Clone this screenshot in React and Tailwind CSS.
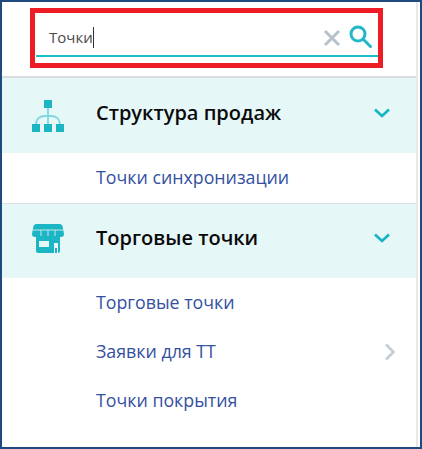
import React from 'react';

const NetworkIcon = () => (
  <svg width="32" height="32" viewBox="0 0 32 32" fill="#1cb5c4">
    <rect x="12" y="0" width="8" height="8" />
    <rect x="0" y="24" width="8" height="8" />
    <rect x="12" y="24" width="8" height="8" />
    <rect x="24" y="24" width="8" height="8" />
    <path d="M16 8v16M4 24c0-5 4-8 9-8h6c5 0 9 3 9 8" fill="none" stroke="#7fd6de" strokeWidth="1.8" />
  </svg>
);

const ShopIcon = () => (
  <svg width="32" height="29" viewBox="0 0 32 29" fill="#1cb5c4" className="mb-[5px]">
    <path d="M4 0h24c1 0 2 1 2.500 2L32 10c0 2-1 3-3 3H3c-2 0-3-1-3-3l1.500-8C2 1 3 0 4 0z" />
    <path d="M4 13h24v14c0 1-1 2-2 2H6c-1 0-2-1-2-2z" />
    <path d="M1 6h30M9 6v6M16 6v6M23 6v6" fill="none" stroke="#bfeaee" strokeWidth="1" />
    <rect x="7" y="17" width="10" height="6" fill="#e6f7f8" />
    <rect x="22" y="19" width="4" height="10" fill="#e6f7f8" />
    <rect x="23" y="24" width="2" height="5" fill="#1cb5c4" />
  </svg>
);

const ChevronDown = () => (
  <svg width="16" height="10" viewBox="0 0 16 10" fill="none" stroke="#13b4c4" strokeWidth="2.6">
    <path d="M1 1.500l7 6.500 7-6.500" />
  </svg>
);

const Section = ({ icon, title, height, lift }) => (
  <div className={`flex items-center bg-[#e6f7f8] pl-[30px] pr-[26px] ${height}`}>
    <div className="flex w-[64px] shrink-0">{icon}</div>
    <div className={`flex-1 text-[20px] font-semibold text-[#0a0a0a] ${lift}`}>{title}</div>
    <div className={`flex ${lift}`}>
      <ChevronDown />
    </div>
  </div>
);

const Item = ({ children, arrow }) => (
  <div className="flex h-[49px] items-center pl-[94px] pr-[20px] text-[17.8px] text-[#34509f]">
    <span className="flex-1">{children}</span>
    {arrow && (
      <svg width="12" height="18" viewBox="0 0 12 18" fill="none" stroke="#c3ced6" strokeWidth="2.6">
        <path d="M2 1.500l7.500 7.500-7.500 7.500" />
      </svg>
    )}
  </div>
);

export default function App() {
  return (
    <div className="h-[449px] w-[422px] border-2 border-[#1f4a80] bg-white font-['Open_Sans',sans-serif]">
      <div className="h-full w-[416px] border-r-2 border-[#e6e8ea]">
        {/* Search */}
        <div className="h-[76px] border-b-2 border-[#dadde0] pl-[28px] pr-[33px] pt-[6px]">
          <div className="h-[60px] border-[5px] border-[#ee1c25] pl-[1px] pt-[6px]">
            <div className="flex h-[38px] items-center border-b-2 border-[#1cbccd] pr-[6px]">
              <span className="pl-[13px] text-[15px] text-[#4a4a4a]">Точки</span>
              <span className="h-[21px] w-px bg-[#333]" />
              <div className="flex-1" />
              <svg width="18" height="18" viewBox="0 0 18 18" fill="none" stroke="#b6c2cb" strokeWidth="3" className="mr-[8px] mt-[2px]">
                <path d="M2 2l14 14M16 2L2 16" />
              </svg>
              <svg width="23" height="23" viewBox="0 0 23 23" fill="none" stroke="#22b8c6" strokeWidth="3" className="mb-[2px]">
                <circle cx="9" cy="9" r="7" />
                <path d="M14 14l7.500 7.500" strokeLinecap="round" />
              </svg>
            </div>
          </div>
        </div>

        <Section icon={<NetworkIcon />} title="Структура продаж" height="h-[75px]" lift="mb-[6px]" />
        <div className="h-[51px] border-b border-[#d9dfe4]">
          <Item>Точки синхронизации</Item>
        </div>
        <Section icon={<ShopIcon />} title="Торговые точки" height="h-[74px]" lift="mb-[7px]" />
        <Item>Торговые точки</Item>
        <Item arrow>Заявки для ТТ</Item>
        <Item>Точки покрытия</Item>
      </div>
    </div>
  );
}
